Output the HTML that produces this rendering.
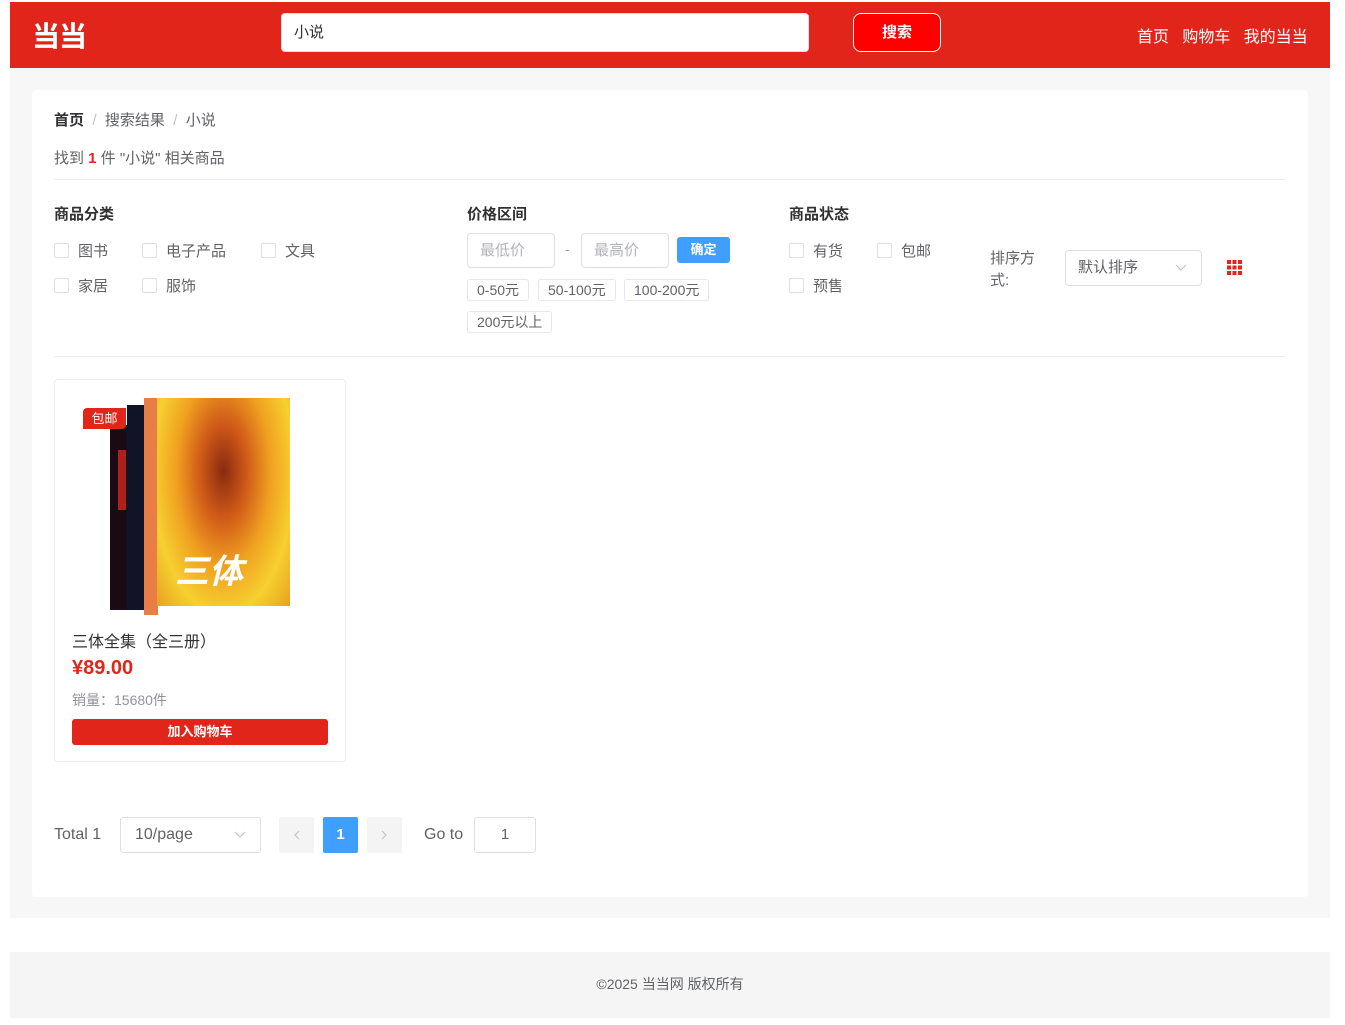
<!DOCTYPE html>
<html><head><meta charset="utf-8"><style>
*{margin:0;padding:0;box-sizing:border-box}
body{width:1345px;height:1025px;background:#fff;font-family:"Liberation Sans","Noto Sans CJK SC",sans-serif;position:relative;overflow:hidden;color:#333}
.a{position:absolute}
.hdr{left:10px;top:2px;width:1320px;height:66px;background:#e1251b}
.main{left:10px;top:68px;width:1320px;height:850px;background:#f7f7f7}
.card{left:32px;top:90px;width:1276px;height:807px;background:#fff;border-radius:4px}
.foot{left:10px;top:952px;width:1320px;height:66px;background:#f5f5f5}
.cb{width:15px;height:15px;border:1px solid #dcdfe6;border-radius:2px;background:#fff}
.t14{font-size:15px;color:#606266;white-space:nowrap}
.tag{height:22px;border:1px solid #e4e7ed;border-radius:3px;font-size:14px;color:#606266;line-height:20px;padding:0 9px;white-space:nowrap}
.h{font-size:15px;font-weight:bold;color:#303133}
</style></head><body>
<div class="a hdr"></div>
<div class="a" style="left:32px;top:15px;color:#fff;font-size:28px;font-weight:bold;letter-spacing:-1px">当当</div>
<div class="a" style="left:281px;top:13px;width:528px;height:39px;background:#fff;border:1px solid #dcdfe6;border-radius:4px;padding-left:12px;line-height:37px;font-size:15px;color:#303133">小说</div>
<div class="a" style="left:853px;top:13px;width:88px;height:39px;background:#f00;border:1px solid #fff;border-radius:8px;color:#fff;font-weight:bold;font-size:15px;text-align:center;line-height:37px">搜索</div>
<div class="a" style="left:1137px;top:23px;color:#fff;font-size:16px;white-space:nowrap">首页&nbsp;&nbsp;&nbsp;购物车&nbsp;&nbsp;&nbsp;我的当当</div>
<div class="a main"></div>
<div class="a card"></div>
<div class="a" style="left:54px;top:109px;font-size:15px;color:#606266;white-space:nowrap"><b style="color:#303133">首页</b>&nbsp;&nbsp;<span style="color:#c0c4cc">/</span>&nbsp;&nbsp;搜索结果&nbsp;&nbsp;<span style="color:#c0c4cc">/</span>&nbsp;&nbsp;小说</div>
<div class="a" style="left:54px;top:147px;font-size:15px;color:#606266;white-space:nowrap">找到 <b style="color:#e1251b">1</b> 件 "小说" 相关商品</div>
<div class="a" style="left:54px;top:179px;width:1231px;height:1px;background:#ebeef5"></div>
<div class="a h" style="left:54px;top:203px">商品分类</div>
<div class="a cb" style="left:54px;top:243px"></div><div class="a t14" style="left:78px;top:240px">图书</div>
<div class="a cb" style="left:142px;top:243px"></div><div class="a t14" style="left:166px;top:240px">电子产品</div>
<div class="a cb" style="left:261px;top:243px"></div><div class="a t14" style="left:285px;top:240px">文具</div>
<div class="a cb" style="left:54px;top:278px"></div><div class="a t14" style="left:78px;top:275px">家居</div>
<div class="a cb" style="left:142px;top:278px"></div><div class="a t14" style="left:166px;top:275px">服饰</div>
<div class="a h" style="left:467px;top:203px">价格区间</div>
<div class="a" style="left:467px;top:233px;width:88px;height:35px;border:1px solid #dcdfe6;border-radius:4px;font-size:15px;color:#b0b3b8;padding-left:12px;line-height:33px">最低价</div>
<div class="a" style="left:565px;top:242px;font-size:13px;color:#909399">-</div>
<div class="a" style="left:581px;top:233px;width:88px;height:35px;border:1px solid #dcdfe6;border-radius:4px;font-size:15px;color:#b0b3b8;padding-left:12px;line-height:33px">最高价</div>
<div class="a" style="left:677px;top:237px;width:53px;height:26px;background:#409eff;border-radius:3px;color:#fff;font-size:13px;font-weight:bold;text-align:center;line-height:26px">确定</div>
<div class="a tag" style="left:467px;top:279px">0-50元</div>
<div class="a tag" style="left:538px;top:279px">50-100元</div>
<div class="a tag" style="left:624px;top:279px">100-200元</div>
<div class="a tag" style="left:467px;top:311px">200元以上</div>
<div class="a h" style="left:789px;top:203px">商品状态</div>
<div class="a cb" style="left:789px;top:243px"></div><div class="a t14" style="left:813px;top:240px">有货</div>
<div class="a cb" style="left:877px;top:243px"></div><div class="a t14" style="left:901px;top:240px">包邮</div>
<div class="a cb" style="left:789px;top:278px"></div><div class="a t14" style="left:813px;top:275px">预售</div>
<div class="a t14" style="left:990px;top:248px;line-height:22px">排序方<br>式:</div>
<div class="a" style="left:1065px;top:250px;width:137px;height:36px;border:1px solid #dcdfe6;border-radius:4px;font-size:15px;color:#606266;padding-left:12px;line-height:34px">默认排序<svg style="position:absolute;right:14px;top:13px" width="12" height="8" viewBox="0 0 12 8"><path d="M1 1l5 5 5-5" fill="none" stroke="#c0c4cc" stroke-width="1.2"/></svg></div>
<svg class="a" style="left:1227px;top:260px" width="15" height="15" viewBox="0 0 15 15"><g fill="#e1251b"><rect x="0" y="0" width="4" height="4"/><rect x="5.5" y="0" width="4" height="4"/><rect x="11" y="0" width="4" height="4"/><rect x="0" y="5.5" width="4" height="4"/><rect x="5.5" y="5.5" width="4" height="4"/><rect x="11" y="5.5" width="4" height="4"/><rect x="0" y="11" width="4" height="4"/><rect x="5.5" y="11" width="4" height="4"/><rect x="11" y="11" width="4" height="4"/></g></svg>
<div class="a" style="left:54px;top:356px;width:1231px;height:1px;background:#ebeef5"></div>
<div class="a" style="left:54px;top:379px;width:292px;height:383px;border:1px solid #ebeef5;border-radius:4px"></div>
<div class="a" style="left:110px;top:425px;width:18px;height:185px;background:#1a0a14"></div>
<div class="a" style="left:118px;top:450px;width:8px;height:60px;background:#b0201a"></div>
<div class="a" style="left:127px;top:405px;width:18px;height:205px;background:#0f1426"></div>
<div class="a" style="left:144px;top:398px;width:14px;height:217px;background:#e87e45"></div>
<div class="a" style="left:157px;top:398px;width:133px;height:208px;background:radial-gradient(ellipse at 50% 35%,#8a2a10 0%,#d05a18 25%,#f0a020 50%,#f6d030 75%,#e8a020 100%)"></div>
<div class="a" style="left:175px;top:555px;width:100px;height:35px;color:#fff;font-size:34px;font-weight:bold;font-style:italic;line-height:35px">三体</div>
<div class="a" style="left:83px;top:408px;width:43px;height:21px;background:#e1251b;border-radius:4px 0 4px 0;color:#fff;font-size:13px;text-align:center;line-height:21px">包邮</div>
<div class="a" style="left:72px;top:628px;font-size:16px;color:#303133">三体全集（全三册）</div>
<div class="a" style="left:72px;top:657px;font-size:20px;font-weight:bold;color:#e1251b">¥89.00</div>
<div class="a" style="left:72px;top:690px;font-size:14px;color:#909399">销量：15680件</div>
<div class="a" style="left:72px;top:719px;width:256px;height:26px;background:#e1251b;border-radius:3px;color:#fff;font-size:13px;font-weight:bold;text-align:center;line-height:26px">加入购物车</div>
<div class="a" style="left:54px;top:826px;font-size:16px;color:#606266">Total 1</div>
<div class="a" style="left:120px;top:817px;width:141px;height:36px;border:1px solid #dcdfe6;border-radius:3px;font-size:16px;color:#606266;padding-left:14px;line-height:34px">10/page<svg style="position:absolute;right:14px;top:13px" width="12" height="8" viewBox="0 0 12 8"><path d="M1 1l5 5 5-5" fill="none" stroke="#c0c4cc" stroke-width="1.2"/></svg></div>
<div class="a" style="left:279px;top:817px;width:35px;height:36px;background:#f4f4f5;border-radius:2px"><svg style="position:absolute;left:14px;top:13px" width="7" height="10" viewBox="0 0 7 10"><path d="M6 1L2 5l4 4" fill="none" stroke="#c0c4cc" stroke-width="1.2"/></svg></div>
<div class="a" style="left:323px;top:817px;width:35px;height:36px;background:#409eff;border-radius:2px;color:#fff;font-weight:bold;text-align:center;line-height:36px;font-size:15px">1</div>
<div class="a" style="left:367px;top:817px;width:35px;height:36px;background:#f4f4f5;border-radius:2px"><svg style="position:absolute;left:14px;top:13px" width="7" height="10" viewBox="0 0 7 10"><path d="M1 1l4 4-4 4" fill="none" stroke="#c0c4cc" stroke-width="1.2"/></svg></div>
<div class="a" style="left:424px;top:826px;font-size:16px;color:#606266">Go to</div>
<div class="a" style="left:474px;top:817px;width:62px;height:36px;border:1px solid #dcdfe6;border-radius:3px;font-size:15px;color:#606266;text-align:center;line-height:34px">1</div>
<div class="a foot"></div>
<div class="a" style="left:0;width:1340px;top:974px;text-align:center;font-size:14px;color:#606266">©2025 当当网 版权所有</div>
</body></html>
